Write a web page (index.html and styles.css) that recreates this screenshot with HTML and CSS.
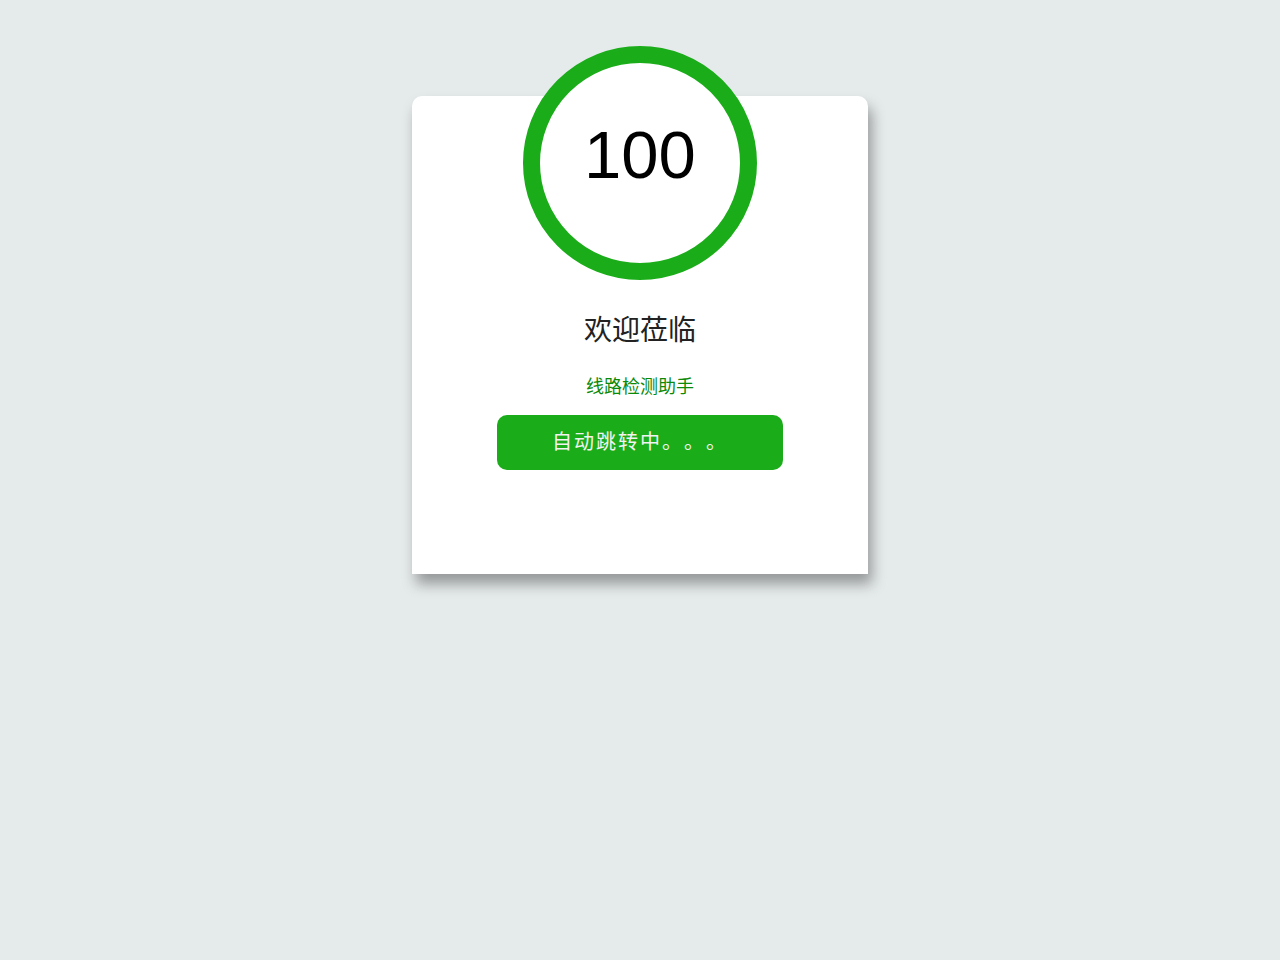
FILE: index.html
```html
<!DOCTYPE html>
<html lang="zh-CN">
<head>
    <meta charset="UTF-8">
    <meta name="viewport" content="width=device-width, initial-scale=1.0">
    <title>欢迎莅临</title>
    <link rel="stylesheet" href="styles.css">
</head>
<body>
    <div class="page">
        <div class="card">
            <div class="score">
                <span class="score-num">100</span>
            </div>

            <h2>欢迎莅临</h2>
            <p class="subtitle">线路检测助手</p>

            <a class="jump-btn" href="#">自动跳转中。。。</a>
        </div>
    </div>
</body>
</html>
```

FILE: styles.css
```css
* {
    margin: 0;
    padding: 0;
    box-sizing: border-box;
    font-family: "Liberation Sans", "Noto Sans CJK SC", sans-serif;
}

body {
    background: #e5eaeb;
    min-height: 100vh;
}

.page {
    padding-top: 96px;
}

.card {
    width: 456px;
    height: 478px;
    margin: 0 auto;
    background: white;
    border-radius: 10px 10px 0 0;
    box-shadow: 4px 10px 14px rgba(0,0,0,0.35);
    display: flex;
    flex-direction: column;
    align-items: center;
}

.score {
    width: 234px;
    height: 234px;
    margin-top: -50px;
    border: 17px solid #1aad19;
    border-radius: 50%;
    background: white;
    text-align: center;
    padding-top: 58px;
}

.score-num {
    display: block;
    font-size: 67px;
    line-height: 1;
    color: #000;
}

h2 {
    margin-top: 30px;
    font-size: 28px;
    font-weight: normal;
    line-height: 42px;
    color: #222;
}

.subtitle {
    margin-top: 22px;
    font-size: 18px;
    line-height: 27px;
    color: #0a8a0a;
}

.jump-btn {
    display: block;
    width: 286px;
    height: 55px;
    margin-top: 14px;
    background: #1aad19;
    border-radius: 10px;
    color: #f2f2f2;
    font-size: 20px;
    line-height: 55px;
    letter-spacing: 2px;
    text-align: center;
    text-decoration: none;
    text-spacing-trim: space-all;
}
```
